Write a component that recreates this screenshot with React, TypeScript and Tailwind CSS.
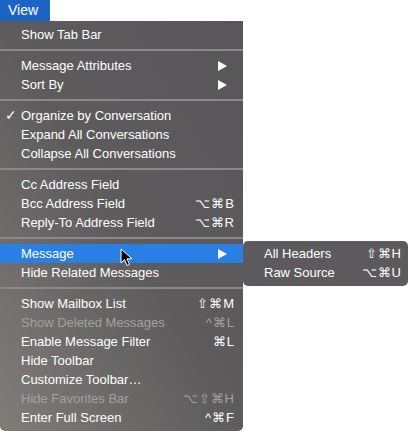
import React from "react";

type Item = { t: string; k?: string; arrow?: boolean; check?: boolean; dis?: boolean; hl?: boolean } | "sep";

const items: Item[] = [
  { t: "Show Tab Bar" }, "sep",
  { t: "Message Attributes", arrow: true }, { t: "Sort By", arrow: true }, "sep",
  { t: "Organize by Conversation", check: true }, { t: "Expand All Conversations" }, { t: "Collapse All Conversations" }, "sep",
  { t: "Cc Address Field" }, { t: "Bcc Address Field", k: "⌥⌘B" }, { t: "Reply-To Address Field", k: "⌥⌘R" }, "sep",
  { t: "Message", arrow: true, hl: true }, { t: "Hide Related Messages" }, "sep",
  { t: "Show Mailbox List", k: "⇧⌘M" }, { t: "Show Deleted Messages", k: "^⌘L", dis: true }, { t: "Enable Message Filter", k: "⌘L" },
  { t: "Hide Toolbar" }, { t: "Customize Toolbar…" }, { t: "Hide Favorites Bar", k: "⌥⇧⌘H", dis: true }, { t: "Enter Full Screen", k: "^⌘F" },
];

export default function App() {
  return (
    <div className="relative w-[408px] h-[431px] bg-white overflow-hidden text-[13px] leading-[19px] text-white" style={{ fontFamily: '"Helvetica Neue", "Liberation Sans", Arial, sans-serif' }}>
      <div className="h-[21px] w-[50px] bg-[#1b64c4] pl-[8px] pt-[1px] text-[14px] leading-[19px]">View</div>
      <div className="w-[243px] h-[410px] rounded-b-[5px] pt-[4px] bg-gradient-to-tr from-[#807d79] via-[#5d5b5c] to-[#585659]">
        {items.map((it, i) =>
          it === "sep" ? (
            <div key={i} className="h-[12px] flex items-center"><div className="h-[2px] w-full bg-[#8a8889]" /></div>
          ) : (
            <div key={i} className={`relative h-[19px] flex items-center pl-[21px] pr-[8px] ${it.hl ? "bg-[#2a7fe5]" : ""} ${it.dis ? "text-[#a3a1a0]" : ""}`}>
              {it.check && <span className="absolute left-[5px] text-[14px]">✓</span>}
              <span className="flex-1">{it.t}</span>
              {it.k && <span className="tracking-[1px]">{it.k}</span>}
              {it.arrow && (
                <svg width="9" height="10" viewBox="0 0 9 10" className="mr-[8px]"><path d="M0 0 L9 5 L0 10 Z" fill="white" /></svg>
              )}
              {it.hl && (
                <svg width="14" height="20" viewBox="0 0 14 20" className="absolute left-[120px] top-[4px]">
                  <path d="M1 1 L1 15 L4.5 11.5 L7 17.5 L9.5 16.5 L7 10.8 L12 10.8 Z" fill="black" stroke="white" strokeWidth="1" />
                </svg>
              )}
            </div>
          )
        )}
      </div>
      <div className="absolute left-[243px] top-[241px] w-[165px] h-[45px] rounded-[5px] bg-[#5c5a5c] pt-[3px]">
        <div className="flex h-[19px] items-center pl-[21px] pr-[6px]"><span className="flex-1">All Headers</span><span className="tracking-[1px]">⇧⌘H</span></div>
        <div className="flex h-[19px] items-center pl-[21px] pr-[6px]"><span className="flex-1">Raw Source</span><span className="tracking-[1px]">⌥⌘U</span></div>
      </div>
    </div>
  );
}
